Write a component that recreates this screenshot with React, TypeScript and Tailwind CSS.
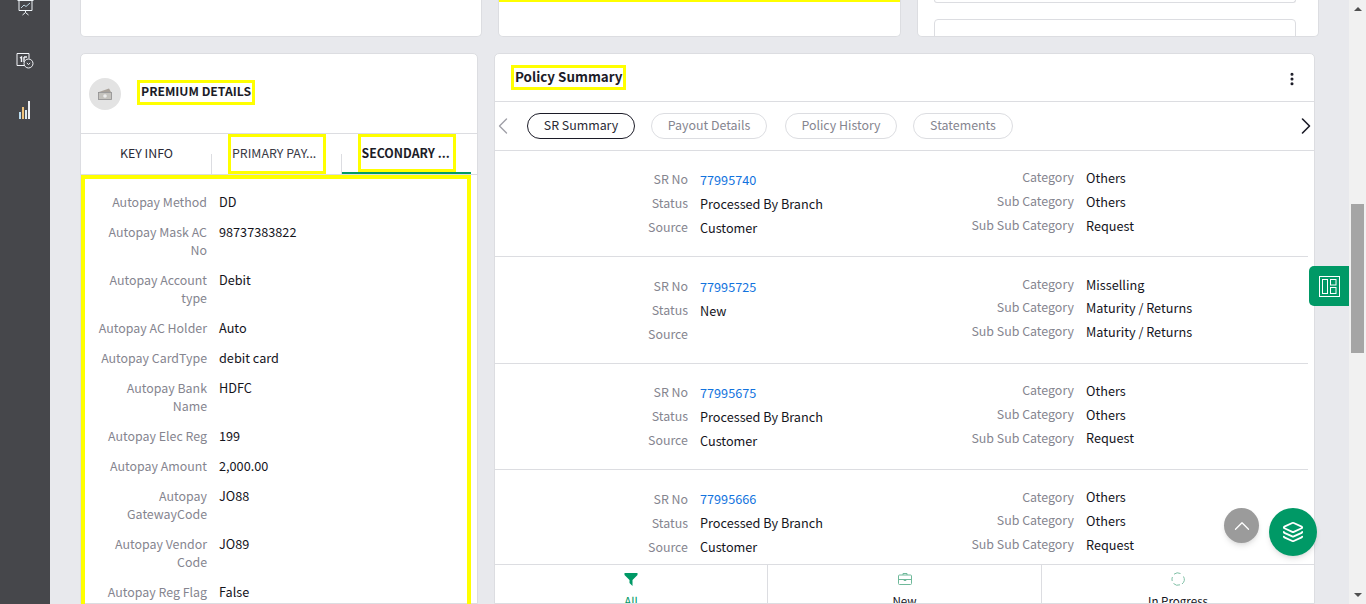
import { ChevronLeft, ChevronRight, ChevronUp, Layers, MoreVertical } from 'lucide-react'

const FONT = "font-['Noto_Sans_CJK_SC','Noto_Sans',sans-serif]"

const premiumRows = [
  ['Autopay Method', 'DD'],
  ['Autopay Mask AC No', '98737383822'],
  ['Autopay Account type', 'Debit'],
  ['Autopay AC Holder', 'Auto'],
  ['Autopay CardType', 'debit card'],
  ['Autopay Bank Name', 'HDFC'],
  ['Autopay Elec Reg', '199'],
  ['Autopay Amount', '2,000.00'],
  ['Autopay GatewayCode', 'JO88'],
  ['Autopay Vendor Code', 'JO89'],
  ['Autopay Reg Flag', 'False'],
]

const srRows = [
  { no: '77995740', status: 'Processed By Branch', source: 'Customer', cat: 'Others', sub: 'Others', subSub: 'Request' },
  { no: '77995725', status: 'New', source: '', cat: 'Misselling', sub: 'Maturity / Returns', subSub: 'Maturity / Returns' },
  { no: '77995675', status: 'Processed By Branch', source: 'Customer', cat: 'Others', sub: 'Others', subSub: 'Request' },
  { no: '77995666', status: 'Processed By Branch', source: 'Customer', cat: 'Others', sub: 'Others', subSub: 'Request' },
]

const pills = ['SR Summary', 'Payout Details', 'Policy History', 'Statements']

function Sidebar() {
  return (
    <aside className="w-[50px] shrink-0 bg-[#46474b] flex flex-col items-center">
      <svg width="17" height="17" viewBox="0 0 17 17" fill="none" stroke="#eef4f8" strokeWidth="1" className="mt-[-1px]">
        <path d="M0.5 1.5h16M2 1.5v10h13v-10M8.5 11.5v2M5.5 16l3-2.5 3 2.5" />
        <path d="M4 9l3-3 2 1.5 4-3.5" stroke="#bcd3e0" />
      </svg>
      <svg width="18" height="16" viewBox="0 0 18 16" fill="none" stroke="#f2f4f8" strokeWidth="1" className="mt-[37px]">
        <path d="M9 12.5H1V0.5h12v5" />
        <path d="M4 5l1.5-1v5M8 4h3M8 4v5" strokeWidth="1.4" />
        <circle cx="12.5" cy="10.5" r="4.5" fill="#46474b" />
        <path d="M10.8 10l1.7 1.5 1.7-1.5" />
      </svg>
      <svg width="14" height="18" viewBox="0 0 14 18" className="mt-[32px]">
        <rect x="1" y="11" width="2" height="7" fill="#b9dcef" />
        <rect x="4" y="6" width="2" height="12" fill="#eec27a" />
        <rect x="7" y="9" width="2" height="9" fill="#d9e8ef" />
        <rect x="10" y="0" width="2" height="18" fill="#eef0f4" />
      </svg>
    </aside>
  )
}

function TopCards() {
  return (
    <div className="flex h-[37px] gap-[16px] w-[1239px] shrink-0">
      <div className="w-[402px] bg-white border-x border-b border-[#dcdde1] rounded-b-[5px]" />
      <div className="w-[403px] bg-white border-x border-b border-[#dcdde1] rounded-b-[5px]">
        <div className="h-[2px] bg-[#ffff00]" />
      </div>
      <div className="w-[402px] bg-white border-x border-b border-[#dcdde1] rounded-b-[5px] px-[16px] overflow-hidden">
        <div className="h-[3px] w-[362px] border-x border-b border-[#dcdde1] rounded-b-[4px]" />
        <div className="h-[30px] w-[362px] mt-[16px] border border-[#dcdde1] rounded-t-[4px]" />
      </div>
    </div>
  )
}

function PremiumCard() {
  return (
    <section className="w-[398px] shrink-0 bg-white border border-[#dcdde1] rounded-t-[5px] flex flex-col">
      <div className="h-[80px] shrink-0 flex items-start pl-[8px] border-b border-[#dcdde1]">
        <div className="mt-[24px] w-[32px] h-[32px] rounded-full bg-[#e3e3e3] flex items-center justify-center">
          <svg width="16" height="14" viewBox="0 0 16 14" fill="none">
            <path d="M2 5l10-3.5 2 3.5z" fill="#a9a29a" />
            <rect x="1.5" y="5.5" width="13" height="7" fill="#c4c2bd" stroke="#8e8e8e" strokeWidth="0.8" />
            <circle cx="8" cy="9" r="1.8" fill="#ececec" />
          </svg>
        </div>
        <h2 className="mt-[26px] ml-[16px] border-[3px] border-[#ffff00] h-[25px] px-[1px] text-[12.2px] leading-[17px] font-bold text-[#1c1c28] whitespace-nowrap">
          PREMIUM DETAILS
        </h2>
      </div>
      <div className="h-[41px] shrink-0 flex text-[12.4px] border-b border-[#dcdde1]">
        <div className="w-[131px] flex items-center justify-center text-[#2a2a35] relative pb-[2px]">
          KEY INFO
          <span className="absolute right-0 bottom-0 h-[20px] w-px bg-[#dcdde1]" />
        </div>
        <div className="w-[130px] flex items-start justify-center relative">
          <span className="border-[3px] border-[#ffff00] h-[40px] w-[98px] pl-[1px] flex items-center text-[#3a3a45] text-[12.4px] whitespace-nowrap pb-[2px]">
            PRIMARY PAY...
          </span>
          <span className="absolute right-0 bottom-0 h-[20px] w-px bg-[#dcdde1]" />
        </div>
        <div className="w-[129px] h-[40px] flex items-start justify-center border-b-2 border-[#009966]">
          <span className="border-[3px] border-[#ffff00] h-[38px] w-[98px] pl-[1px] flex items-center font-bold text-[#1c1c28] text-[12.3px] whitespace-nowrap">
            SECONDARY ...
          </span>
        </div>
      </div>
      <div className="w-[390px] grow border-[4px] border-[#ffff00] border-b-0 pt-[14px] text-[12.7px] leading-[18px]">
        {premiumRows.map(([label, value]) => (
          <div key={label} className="flex mb-[12px]">
            <div className="ml-[10px] w-[112px] shrink-0 text-right text-[12.4px] text-[#85858f]">{label}</div>
            <div className="ml-[12px] text-[#14141c]">{value}</div>
          </div>
        ))}
      </div>
    </section>
  )
}

function SrField({ label, value, link }: { label: string; value: string; link?: boolean }) {
  return (
    <div className="flex h-[18px] items-center">
      <div className="w-[193px] shrink-0 text-right text-[12.4px] text-[#85858f]">{label}</div>
      <div className={`ml-[12px] whitespace-nowrap text-[12.7px] ${link ? 'text-[#1273de]' : 'text-[#14141c]'}`}>{value}</div>
    </div>
  )
}

function PolicyCard() {
  return (
    <section className="w-[821px] shrink-0 bg-white border border-[#dcdde1] rounded-t-[5px] flex flex-col overflow-hidden">
      <div className="h-[48px] shrink-0 flex items-center justify-between pl-[16px] pr-[14px] pb-[1px] border-b border-[#dcdde1]">
        <h2 className="border-[3px] border-[#ffff00] h-[25px] px-[1px] text-[13.4px] leading-[17px] font-bold text-[#1c1c28] whitespace-nowrap">
          Policy Summary
        </h2>
        <MoreVertical size={16} strokeWidth={2.6} className="mt-[3px] text-[#1c1c28]" />
      </div>
      <div className="h-[49px] shrink-0 flex items-center border-b border-[#dcdde1] text-[12.4px] relative">
        <ChevronLeft size={28} strokeWidth={1.2} className="absolute left-[-6px] top-[10px] text-[#a0a0a8]" />
        <div className="flex gap-[16px] ml-[32px]">
          {pills.map((pill, i) => (
            <div
              key={pill}
              className={`h-[26px] pb-[2px] flex items-center justify-center rounded-full border ${
                i === 0 ? 'border-[#1c1c28] text-[#2a2a35] w-[108px]' : 'border-[#dcdde1] text-[#85858f]'
              } ${i === 1 ? 'w-[116px]' : ''} ${i === 2 ? 'w-[112px] ml-[2px]' : ''} ${i === 3 ? 'w-[100px]' : ''}`}
            >
              {pill}
            </div>
          ))}
        </div>
        <ChevronRight size={28} strokeWidth={1.4} className="absolute right-[-6px] top-[10px] text-[#1c1c28]" />
      </div>
      <div className="h-[413px] shrink-0 overflow-hidden">
        {srRows.map(row => (
          <div key={row.no} className="h-[106.4px] w-[813px] border-b border-[#dcdde1] flex">
            <div className="w-[386px] pt-[19.7px] flex flex-col gap-[6px]">
              <SrField label="SR No" value={row.no} link />
              <SrField label="Status" value={row.status} />
              <SrField label="Source" value={row.source} />
            </div>
            <div className="pt-[17.7px] flex flex-col gap-[5.7px]">
              <SrField label="Category" value={row.cat} />
              <SrField label="Sub Category" value={row.sub} />
              <SrField label="Sub Sub Category" value={row.subSub} />
            </div>
          </div>
        ))}
      </div>
      <div className="grow flex border-t border-[#dcdde1] text-[11.6px] leading-[18px]">
        <div className="w-[273px] flex flex-col items-center pt-[8px] border-r border-[#dcdde1] text-[#009966]">
          <svg width="14" height="13" viewBox="0 0 14 13" fill="#009966">
            <path d="M0.5 0h13v2L8.5 7v6L5.5 10V7L0.5 2z" />
          </svg>
          <span className="mt-[6px]">All</span>
        </div>
        <div className="w-[274px] flex flex-col items-center pt-[7px] border-r border-[#dcdde1] text-[#14141c]">
          <svg width="14" height="14" viewBox="0 0 14 14" fill="none" stroke="#6fb99a" strokeWidth="1">
            <path d="M5 3V1.5h4V3" />
            <rect x="0.5" y="3" width="13" height="9.5" rx="1" />
            <path d="M0.5 7.5h13M6 7.5v1h2v-1" />
          </svg>
          <span className="mt-[6px]">New</span>
        </div>
        <div className="grow flex flex-col items-center pt-[7px] text-[#14141c]">
          <svg width="14" height="14" viewBox="0 0 14 14" fill="none" stroke="#7fbfa5" strokeWidth="1">
            <path d="M3 2.2A6 6 0 0 1 9.5 1.5M12.5 4.5a6 6 0 0 1-1.5 7.5M9 12.8a6 6 0 0 1-6.5-1.3M1.2 9A6 6 0 0 1 1.4 5" />
          </svg>
          <span className="mt-[6px]">In Progress</span>
        </div>
      </div>
    </section>
  )
}

export default function App() {
  return (
    <div className={`${FONT} relative flex w-[1366px] h-[604px] overflow-hidden bg-[#e8e9ed]`}>
      <Sidebar />
      <main className="flex-1 min-w-0 pl-[30px] flex flex-col">
        <TopCards />
        <div className="flex gap-[16px] mt-[16px] h-[551px] shrink-0">
          <PremiumCard />
          <PolicyCard />
        </div>
      </main>
      <div className="w-[17px] shrink-0 bg-[#f1f1f1] flex flex-col items-center relative">
        <span className="mt-[7px] w-0 h-0 border-x-[4px] border-x-transparent border-b-[4px] border-b-[#505050]" />
        <div className="mt-[193px] w-[13px] h-[149px] bg-[#a5a5a5]" />
        <span className="absolute bottom-[7px] w-0 h-0 border-x-[4px] border-x-transparent border-t-[4px] border-t-[#505050]" />
      </div>

      {/* floating buttons */}
      <div className="absolute left-[1309px] top-[266px] w-[40px] h-[40px] bg-[#009966] rounded-l-[5px] flex items-center justify-center">
        <svg width="21" height="21" viewBox="0 0 21 21" fill="none" stroke="#fff" strokeWidth="1">
          <rect x="0.5" y="0.5" width="20" height="20" />
          <rect x="3.5" y="3.5" width="5" height="14" />
          <rect x="11.5" y="3.5" width="5.5" height="5.5" />
          <rect x="11.5" y="11.5" width="5.5" height="6" />
        </svg>
      </div>
      <div className="absolute left-[1224px] top-[508px] w-[35px] h-[35px] rounded-full bg-[#9b9b9b] shadow-md flex items-center justify-center">
        <ChevronUp size={26} strokeWidth={1.2} className="text-white" />
      </div>
      <div className="absolute left-[1269px] top-[508px] w-[48px] h-[48px] rounded-full bg-[#009966] shadow-md flex items-center justify-center">
        <Layers size={22} className="text-white" />
      </div>
    </div>
  )
}
